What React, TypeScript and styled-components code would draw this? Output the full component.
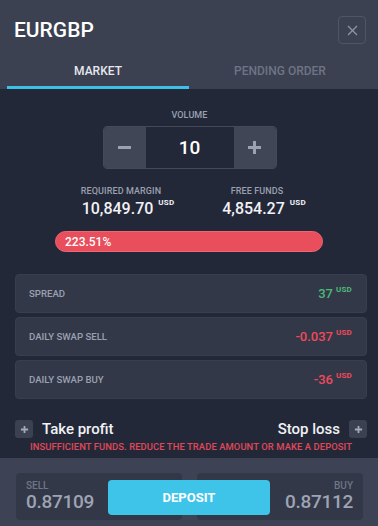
import styled, { createGlobalStyle } from "styled-components";

const GlobalStyle = createGlobalStyle`
  * { box-sizing: border-box; }
  html, body { margin: 0; padding: 0; background: #232838; }
  body { font-family: Roboto, "Noto Sans", "Liberation Sans", sans-serif; }
`;

const rows = [
  { label: "SPREAD", value: "37", tone: "green" },
  { label: "DAILY SWAP SELL", value: "-0.037", tone: "red" },
  { label: "DAILY SWAP BUY", value: "-36", tone: "red" },
];

const PlusIcon = ({ size = 9 }: { size?: number }) => (
  <svg width={size} height={size} viewBox="0 0 10 10">
    <path d="M5 1v8M1 5h8" stroke="currentColor" strokeWidth="2" />
  </svg>
);

export default function App() {
  return (
    <>
      <GlobalStyle />
      <Page>
        <Header>
          <TitleRow>
            <Title>EURGBP</Title>
            <CloseButton>
              <svg width="11" height="11" viewBox="0 0 11 11">
                <path d="M1 1l9 9M10 1l-9 9" stroke="currentColor" strokeWidth="1.4" />
              </svg>
            </CloseButton>
          </TitleRow>
          <Tabs>
            <Tab active>MARKET</Tab>
            <Tab>PENDING ORDER</Tab>
          </Tabs>
        </Header>

        <Body>
          <Volume>
            <SmallLabel>VOLUME</SmallLabel>
            <Stepper>
              <StepButton>
                <svg width="13" height="3" viewBox="0 0 13 3">
                  <rect width="13" height="3" fill="currentColor" />
                </svg>
              </StepButton>
              <StepValue>10</StepValue>
              <StepButton>
                <svg width="13" height="13" viewBox="0 0 13 13">
                  <path d="M6.5 0v13M0 6.5h13" stroke="currentColor" strokeWidth="3" />
                </svg>
              </StepButton>
            </Stepper>
          </Volume>

          <Funds>
            <Fund>
              <SmallLabel>REQUIRED MARGIN</SmallLabel>
              <FundValue>
                10,849.70<Cur>USD</Cur>
              </FundValue>
            </Fund>
            <Fund>
              <SmallLabel>FREE FUNDS</SmallLabel>
              <FundValue>
                4,854.27<Cur>USD</Cur>
              </FundValue>
            </Fund>
          </Funds>

          <Bar>223.51%</Bar>

          <InfoList>
            {rows.map((r) => (
              <InfoRow key={r.label}>
                <InfoLabel>{r.label}</InfoLabel>
                <InfoValue tone={r.tone}>
                  {r.value}
                  <Cur>USD</Cur>
                </InfoValue>
              </InfoRow>
            ))}
          </InfoList>

          <Limits>
            <Limit>
              <SmallPlus>
                <PlusIcon />
              </SmallPlus>
              Take profit
            </Limit>
            <Limit>
              Stop loss
              <SmallPlus>
                <PlusIcon />
              </SmallPlus>
            </Limit>
          </Limits>
          <Error>INSUFFICIENT FUNDS. REDUCE THE TRADE AMOUNT OR MAKE A DEPOSIT</Error>
        </Body>

        <Footer>
          <PriceBox>
            <PriceLabel>SELL</PriceLabel>
            <Price>0.87109</Price>
          </PriceBox>
          <PriceBox right>
            <PriceLabel>BUY</PriceLabel>
            <Price>0.87112</Price>
          </PriceBox>
          <DepositButton>DEPOSIT</DepositButton>
        </Footer>
      </Page>
    </>
  );
}

const Page = styled.div`
  width: 378px;
  height: 526px;
  display: flex;
  flex-direction: column;
  background: #232838;
  overflow: hidden;
`;

const Header = styled.div`
  background: #3b4151;
  padding: 0 7px;
`;

const TitleRow = styled.div`
  display: flex;
  justify-content: space-between;
  align-items: flex-start;
  padding: 15px 5px 0 7px;
  height: 58px;
`;

const Title = styled.div`
  color: #ffffff;
  font-size: 21px;
  font-weight: 500;
  line-height: 22px;
  padding-top: 4px;
`;

const CloseButton = styled.div`
  width: 28px;
  height: 28px;
  margin-top: 1px;
  border: 1px solid #4f5566;
  border-radius: 4px;
  display: flex;
  align-items: center;
  justify-content: center;
  color: #8d93a3;
`;

const Tabs = styled.div`
  display: flex;
  height: 31px;
`;

const Tab = styled.div<{ active?: boolean }>`
  flex: 1;
  display: flex;
  align-items: center;
  justify-content: center;
  padding-bottom: 3px;
  font-size: 12px;
  font-weight: 500;
  color: ${(p) => (p.active ? "#e6e8ee" : "#6e7485")};
  border-bottom: 3px solid ${(p) => (p.active ? "#3ec0e6" : "transparent")};
`;

const Body = styled.div`
  flex: 1;
  display: flex;
  flex-direction: column;
  padding: 21px 11px 0 15px;
`;

const SmallLabel = styled.div`
  font-size: 9px;
  font-weight: 500;
  color: #9aa0b0;
  letter-spacing: 0.1px;
`;

const Volume = styled.div`
  display: flex;
  flex-direction: column;
  align-items: center;
  gap: 6px;
  margin-right: 3px;
`;

const Stepper = styled.div`
  display: flex;
  height: 43px;
  border: 1px solid #444a5a;
  border-radius: 4px;
  overflow: hidden;
`;

const StepButton = styled.div`
  width: 42px;
  display: flex;
  align-items: center;
  justify-content: center;
  background: #404656;
  color: #9ba1b1;
`;

const StepValue = styled.div`
  width: 88px;
  display: flex;
  align-items: center;
  justify-content: center;
  background: #232838;
  color: #ffffff;
  font-size: 19px;
  font-weight: 500;
`;

const Funds = styled.div`
  display: flex;
  gap: 16px;
  margin-top: 17px;
  padding-left: 46px;
`;

const Fund = styled.div`
  width: 120px;
  display: flex;
  flex-direction: column;
  align-items: center;
  gap: 3px;
`;

const FundValue = styled.div`
  color: #f1f2f5;
  font-size: 16px;
  font-weight: 500;
  display: flex;
  align-items: flex-start;
  margin-left: 14px;
`;

const Cur = styled.span`
  font-size: 8px;
  font-weight: 700;
  margin-left: 5px;
  margin-top: -1px;
  letter-spacing: 0.2px;
`;

const Bar = styled.div`
  margin: 13px 44px 0 40px;
  height: 21px;
  border-radius: 11px;
  background: #e84e5b;
  border: 1px solid #f06672;
  color: #ffffff;
  font-size: 12px;
  font-weight: 500;
  display: flex;
  align-items: center;
  padding-left: 9px;
`;

const InfoList = styled.div`
  display: flex;
  flex-direction: column;
  gap: 4px;
  margin-top: 22px;
`;

const InfoRow = styled.div`
  height: 39px;
  display: flex;
  justify-content: space-between;
  align-items: center;
  padding: 0 14px 0 13px;
  background: #333848;
  border: 1px solid #383e4e;
  border-radius: 4px;
`;

const InfoLabel = styled.div`
  font-size: 9.6px;
  font-weight: 500;
  color: #9aa0b0;
`;

const InfoValue = styled.div<{ tone: string }>`
  display: flex;
  align-items: flex-start;
  font-size: 13px;
  font-weight: 500;
  color: ${(p) => (p.tone === "green" ? "#4cb878" : "#ef4a5b")};
  & > span {
    margin-left: 3px;
  }
`;

const Limits = styled.div`
  display: flex;
  justify-content: space-between;
  align-items: center;
  margin-top: 21px;
`;

const Limit = styled.div`
  display: flex;
  align-items: center;
  gap: 9px;
  color: #f1f2f5;
  font-size: 15px;
  font-weight: 500;
`;

const SmallPlus = styled.div`
  width: 18px;
  height: 18px;
  border-radius: 3px;
  background: #3b4151;
  color: #a3a9b8;
  display: flex;
  align-items: center;
  justify-content: center;
`;

const Error = styled.div`
  text-align: center;
  color: #e0485a;
  font-size: 9.4px;
  font-weight: 500;
  margin-top: 3px;
  letter-spacing: 0.1px;
  white-space: nowrap;
`;

const Footer = styled.div`
  height: 68px;
  background: #3d4354;
  display: flex;
  justify-content: space-between;
  align-items: center;
  padding: 0 15px 0 16px;
  position: relative;
`;

const PriceBox = styled.div<{ right?: boolean }>`
  width: 166px;
  height: 47px;
  margin-top: 8px;
  border-radius: 4px;
  background: #333848;
  display: flex;
  flex-direction: column;
  align-items: ${(p) => (p.right ? "flex-end" : "flex-start")};
  justify-content: center;
  padding: 0 10px;
`;

const PriceLabel = styled.div`
  font-size: 10px;
  font-weight: 500;
  color: #6f7586;
`;

const Price = styled.div`
  font-size: 19px;
  font-weight: 500;
  color: #9ea4b3;
  line-height: 22px;
  letter-spacing: -0.3px;
`;

const DepositButton = styled.div`
  position: absolute;
  left: 108px;
  top: 22px;
  width: 162px;
  height: 35px;
  border-radius: 4px;
  background: #3ec4e9;
  color: #ffffff;
  font-size: 13px;
  font-weight: 700;
  display: flex;
  align-items: center;
  justify-content: center;
`;
